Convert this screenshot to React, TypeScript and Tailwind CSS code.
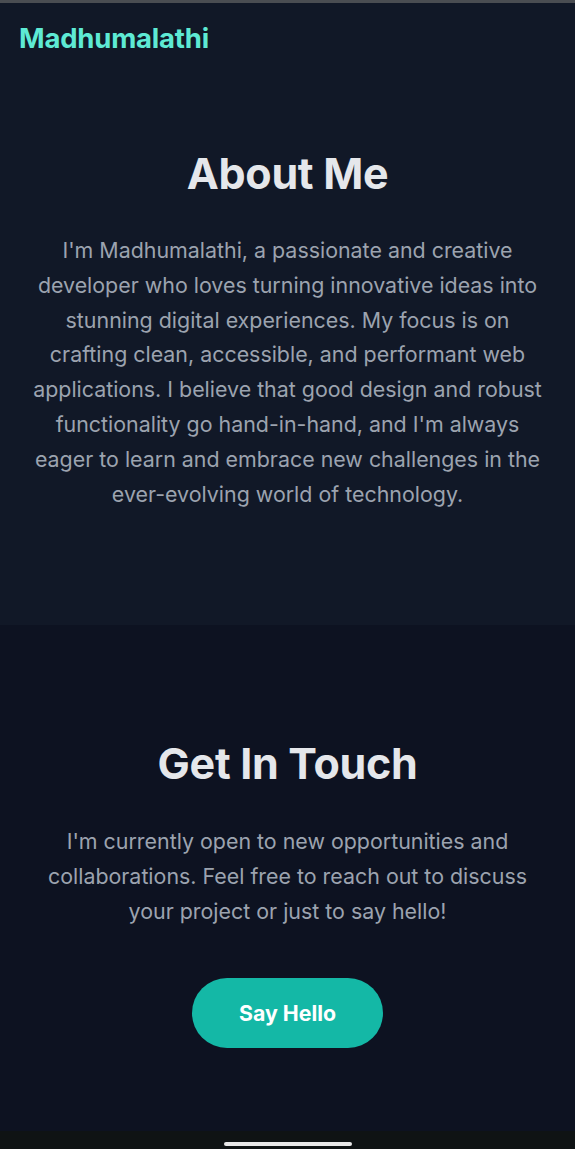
import React from "react";

export default function App() {
  return (
    <div
      className="min-h-[1149px] flex flex-col bg-[#0d1221]"
      style={{ fontFamily: "Inter, 'Noto Sans', sans-serif" }}
    >
      <div className="h-[3px] bg-[#4a4d52]" />
      <header className="bg-[#111827] px-[19px] pt-[17px] pb-[13px]">
        <div className="text-[27.5px] leading-[36px] font-bold text-[#5eead4] tracking-[-0.2px]">
          Madhumalathi
        </div>
      </header>
      <section className="bg-[#111827] px-8 pt-[80px] pb-[114px] text-center">
        <h2 className="text-[43px] leading-[48px] font-bold text-[#e5e7eb] tracking-[-0.3px]">
          About Me
        </h2>
        <p className="mt-[36px] mx-auto max-w-[515px] text-[21.4px] leading-[34.8px] text-[#9ca3af]">
          I'm Madhumalathi, a passionate and creative developer who loves turning innovative ideas into stunning digital experiences. My focus is on crafting clean, accessible, and performant web applications. I believe that good design and robust functionality go hand-in-hand, and I'm always eager to learn and embrace new challenges in the ever-evolving world of technology.
        </p>
      </section>
      <section className="bg-[#0d1221] px-8 pt-[114px] pb-[83px] text-center flex-1">
        <h2 className="text-[43px] leading-[48px] font-bold text-[#e5e7eb] tracking-[-0.3px]">
          Get In Touch
        </h2>
        <p className="mt-[37px] mx-auto max-w-[515px] text-[21.4px] leading-[34.8px] text-[#9ca3af]">
          I'm currently open to new opportunities and collaborations. Feel free to reach out to discuss your project or just to say hello!
        </p>
        <button className="mt-[49px] rounded-full bg-[#14b8a6] px-[47px] py-[20px] text-[21.3px] leading-[30px] font-bold text-white">
          Say Hello
        </button>
      </section>
      <div className="h-[19px] bg-[#0f1314] flex items-start justify-center pt-[11px]">
        <div className="w-[128px] h-[4px] rounded-full bg-[#e8e8e8]" />
      </div>
    </div>
  );
}
